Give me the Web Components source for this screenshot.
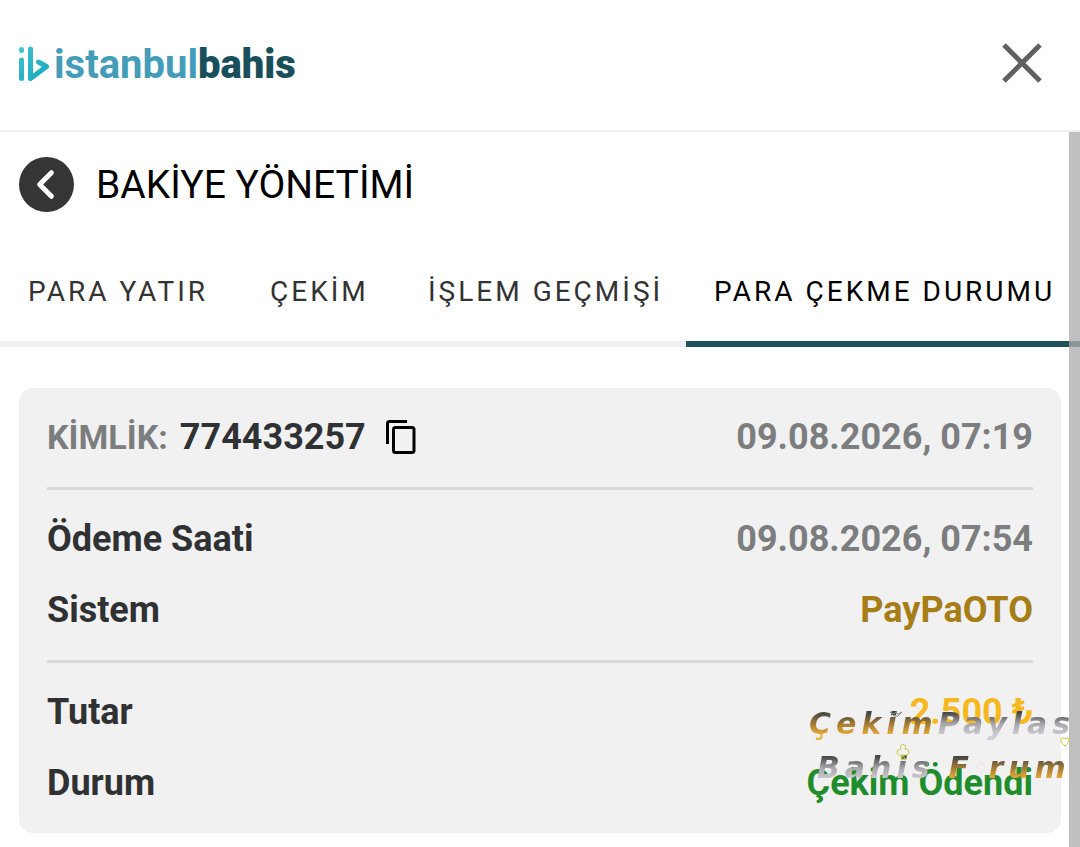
<!DOCTYPE html>
<html lang="tr">
<head>
<meta charset="utf-8">
<meta name="viewport" content="width=device-width, initial-scale=1">
<title>Bakiye Yönetimi</title>
<style>
body { margin: 0; background: #fff; color: #303133; font-family: Roboto, "Noto Sans", sans-serif; }
</style>
</head>
<body>
<balance-page></balance-page>
<script>
const define = (name, html, setup) => customElements.define(name, class extends HTMLElement {
  connectedCallback() {
    if (this.shadowRoot) return;
    const t = document.createElement('template');
    t.innerHTML = html;
    this.attachShadow({ mode: 'open' }).append(t.content.cloneNode(true));
    if (setup) setup(this, this.shadowRoot);
  }
});

define('brand-logo', `
<style>
:host { display: block; }
a { display: flex; align-items: center; gap: 4px; padding-top: 3px; text-decoration: none; color: #449db8; font-size: 40px; line-height: 48px; font-weight: 700; }
b { color: #184f5a; }
svg { display: block; }
</style>
<a href="#" aria-label="istanbulbahis">
<svg width="32" height="38" viewBox="0 0 32 38" fill="none" stroke-width="5" stroke-linecap="round" stroke-linejoin="round">
<defs><linearGradient id="g" gradientUnits="userSpaceOnUse" x1="0" y1="0" x2="32" y2="38"><stop stop-color="#45c3d3"/><stop offset="1" stop-color="#0fa6bb"/></linearGradient></defs>
<g stroke="url(#g)"><path d="M3.500 3.500v1M3.500 14v18.500M12.500 3v29.500L28.500 20.500L20.500 16"/></g>
</svg><span>istanbul<b>bahis</b></span></a>`);

define('site-header', `
<style>
:host { display: flex; align-items: center; justify-content: space-between; padding: 36px 36px 40px 18px; border-bottom: 2px solid #efefef; }
button { border: 0; background: none; padding: 2px; height: 54px; display: flex; align-items: center; }
</style>
<slot></slot>
<button type="button" aria-label="Kapat"><svg width="40" height="40" viewBox="0 0 40 40" stroke="#606060" stroke-width="5"><path d="M2 2L38 38M38 2L2 38"/></svg></button>`);

define('page-title', `
<style>
:host { display: flex; align-items: center; gap: 22px; padding: 25px 19px; }
button { width: 55px; height: 55px; border: 0; border-radius: 50%; padding: 0; background: #343536; display: grid; place-items: center; }
h1 { margin: 0; font-size: 39px; line-height: 52px; font-weight: 400; color: #000; }
</style>
<button type="button" aria-label="Geri"><svg width="55" height="55" viewBox="0 0 56 56" fill="none" stroke="#fff" stroke-width="5" stroke-linecap="round" stroke-linejoin="round"><path d="M33 16L21 28L33 40"/></svg></button>
<h1><slot></slot></h1>`);

define('tab-bar', `
<style>
:host { display: block; }
nav { display: grid; grid-template-columns: 242fr 158fr 286fr 394fr; }
</style>
<nav><slot></slot></nav>`);

define('tab-item', `
<style>
:host { display: block; min-width: 0; }
a { display: block; padding: 37px 0 31px 28px; border-bottom: 6px solid #f0f0f0; color: #333; font-size: 28px; line-height: 36px; letter-spacing: 3px; text-decoration: none; white-space: nowrap; }
:host([active]) a { color: #000; border-color: #1c555c; }
</style>
<a href="#"><slot></slot></a>`, (el, root) => {
  if (el.hasAttribute('active')) root.querySelector('a').setAttribute('aria-current', 'page');
});

define('transaction-card', `
<style>
:host { display: block; margin: 41px 19px 14px; padding: 0 28px; border-radius: 14px; background: #f1f1f1; }
</style>
<slot></slot>`);

define('card-section', `
<style>
:host { display: flex; flex-direction: column; gap: 31px; padding: 29px 0 30px; border-bottom: 3px solid #d8d8d8; }
:host(:last-of-type) { border-bottom: 0; }
</style>
<slot></slot>`);

define('info-row', `
<style>
:host { display: flex; align-items: center; justify-content: space-between; gap: 16px; font-size: 36px; line-height: 40px; font-weight: 700; white-space: nowrap; }
.value { color: #7c7d7e; }
:host([tone="brown"]) .value { color: #a67d16; }
:host([tone="gold"]) .value { color: #f6b81f; }
:host([tone="green"]) .value { color: #1f8d2c; }
</style>
<span><slot name="label"></slot></span><span class="value"><slot></slot></span>`);

define('copy-id', `
<style>
:host { display: flex; align-items: center; gap: 12px; }
.key { color: #7c7d7e; font-size: 34px; }
button { border: 0; background: none; padding: 0; margin-left: 8px; display: flex; }
</style>
<span class="key">KİMLİK:</span><span><slot></slot></span>
<button type="button" aria-label="Kopyala"><svg width="30" height="34" viewBox="0 0 30 34" fill="none" stroke="#000" stroke-width="3"><path d="M1.500 24V3.500Q1.500 1.500 3.500 1.500H21"/><rect x="7.500" y="7.500" width="20.500" height="25" rx="2"/></svg></button>`);

define('forum-watermark', `
<style>
:host { position: absolute; right: 0; bottom: 57px; width: 271px; height: 88px; pointer-events: none; font: italic 700 30px/44px "DejaVu Sans", sans-serif; white-space: nowrap; letter-spacing: 5px; }
.line { display: flex; height: 44px; }
.second { padding-left: 8px; }
.second .silver { margin-right: 14px; }
.gold, .silver { background: linear-gradient(#444 24%, #a47b36 50%, #edb039 76%); -webkit-background-clip: text; background-clip: text; color: transparent; }
.silver { background-image: linear-gradient(#464646 24%, #aaa7ac 50%, #d0cbd5 76%); }
svg { position: absolute; inset: 0; overflow: visible; }
.gem { font-size: 16px; font-weight: 400; color: #f0d6d6; letter-spacing: 0; }
</style>
<div class="line"><span class="gold">Çekim</span><span class="silver">Paylas</span></div>
<div class="line second"><span class="silver">Bahis</span><span class="gold">F</span><span class="gem">♢</span><span class="gold">rum</span></div>
<svg width="271" height="88" fill="none" stroke="#c8c52e" stroke-width="1">
<path d="M256 44c-7-6-4-10 0-7c4-3 7 1 0 7z"/>
<path d="M92 57l2-4c-7 2-8-6-2-6c-3-6 7-6 4 0c6 0 5 8-2 6l2 4z"/>
<path stroke="#788" d="M81 10l4 4h4l4-4l-4 2l-2-2l-2 2z"/>
</svg>`);

define('balance-page', `
<style>
:host { display: flex; flex-direction: column; min-height: 100vh; }
main { position: relative; flex: 1; }
.scroll { position: absolute; top: 0; right: 0; bottom: 0; width: 11px; background: #acacac; opacity: .77; }
</style>
<site-header><brand-logo></brand-logo></site-header>
<main>
<page-title>BAKİYE YÖNETİMİ</page-title>
<tab-bar>
<tab-item>PARA YATIR</tab-item><tab-item>ÇEKİM</tab-item><tab-item>İŞLEM GEÇMİŞİ</tab-item><tab-item active>PARA ÇEKME DURUMU</tab-item>
</tab-bar>
<transaction-card>
<card-section><info-row><copy-id slot="label">774433257</copy-id>09.08.2026, 07:19</info-row></card-section>
<card-section>
<info-row><span slot="label">Ödeme Saati</span>09.08.2026, 07:54</info-row>
<info-row tone="brown"><span slot="label">Sistem</span>PayPaOTO</info-row>
</card-section>
<card-section>
<info-row tone="gold"><span slot="label">Tutar</span>2.500 ₺</info-row>
<info-row tone="green"><span slot="label">Durum</span>Çekim Ödendi</info-row>
</card-section>
</transaction-card>
<div class="scroll"></div>
<forum-watermark></forum-watermark>
</main>`);
</script>
</body>
</html>
